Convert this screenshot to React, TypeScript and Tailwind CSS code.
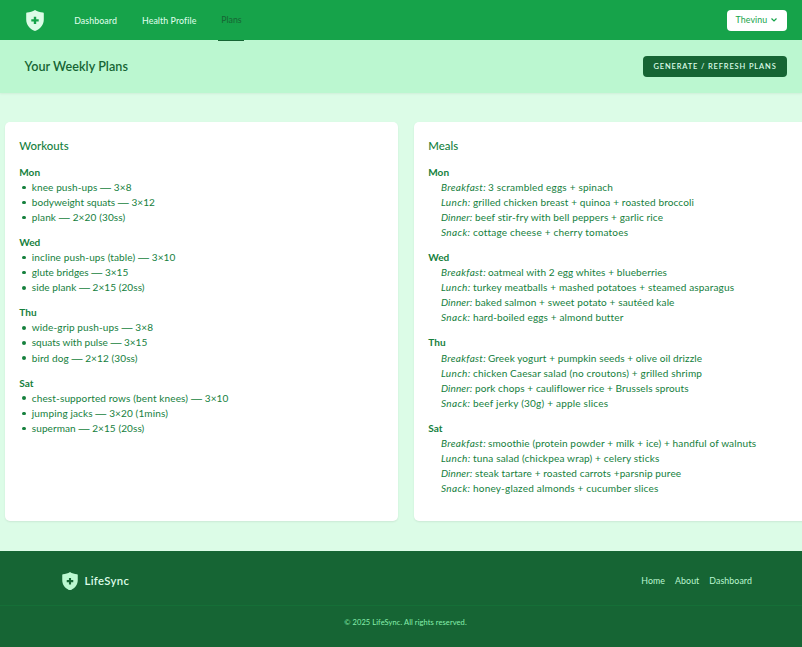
import { ReactNode } from 'react';

type Line = { label?: string; text: string; fit: string };
type Day = { day: string; lines: Line[] };

const workouts: Day[] = [
  { day: 'Mon', lines: [
    { text: 'knee push-ups — 3×8', fit: 'tracking-[0.1px]' },
    { text: 'bodyweight squats — 3×12', fit: 'tracking-[0.03px]' },
    { text: 'plank — 2×20 (30ss)', fit: 'tracking-[0.13px]' },
  ] },
  { day: 'Wed', lines: [
    { text: 'incline push-ups (table) — 3×10', fit: 'tracking-[0.11px]' },
    { text: 'glute bridges — 3×15', fit: 'tracking-[0.02px]' },
    { text: 'side plank — 2×15 (20ss)', fit: 'tracking-[0.06px]' },
  ] },
  { day: 'Thu', lines: [
    { text: 'wide-grip push-ups — 3×8', fit: 'tracking-[0.12px]' },
    { text: 'squats with pulse — 3×15', fit: 'tracking-[0px]' },
    { text: 'bird dog — 2×12 (30ss)', fit: 'tracking-[0.1px]' },
  ] },
  { day: 'Sat', lines: [
    { text: 'chest-supported rows (bent knees) — 3×10', fit: 'tracking-[0.13px]' },
    { text: 'jumping jacks — 3×20 (1mins)', fit: 'tracking-[0.12px]' },
    { text: 'superman — 2×15 (20ss)', fit: 'tracking-[0.08px]' },
  ] },
];

const meals: Day[] = [
  { day: 'Mon', lines: [
    { label: 'Breakfast:', text: '3 scrambled eggs + spinach', fit: 'tracking-[0.19px]' },
    { label: 'Lunch:', text: 'grilled chicken breast + quinoa + roasted broccoli', fit: 'tracking-[0.13px]' },
    { label: 'Dinner:', text: 'beef stir-fry with bell peppers + garlic rice', fit: 'tracking-[0.12px]' },
    { label: 'Snack:', text: 'cottage cheese + cherry tomatoes', fit: 'tracking-[0.2px]' },
  ] },
  { day: 'Wed', lines: [
    { label: 'Breakfast:', text: 'oatmeal with 2 egg whites + blueberries', fit: 'tracking-[0.1px]' },
    { label: 'Lunch:', text: 'turkey meatballs + mashed potatoes + steamed asparagus', fit: 'tracking-[0.155px]' },
    { label: 'Dinner:', text: 'baked salmon + sweet potato + sautéed kale', fit: 'tracking-[0.11px]' },
    { label: 'Snack:', text: 'hard-boiled eggs + almond butter', fit: 'tracking-[0.13px]' },
  ] },
  { day: 'Thu', lines: [
    { label: 'Breakfast:', text: 'Greek yogurt + pumpkin seeds + olive oil drizzle', fit: 'tracking-[0.09px]' },
    { label: 'Lunch:', text: 'chicken Caesar salad (no croutons) + grilled shrimp', fit: 'tracking-[0.16px]' },
    { label: 'Dinner:', text: 'pork chops + cauliflower rice + Brussels sprouts', fit: 'tracking-[0.1px]' },
    { label: 'Snack:', text: 'beef jerky (30g) + apple slices', fit: 'tracking-[0.2px]' },
  ] },
  { day: 'Sat', lines: [
    { label: 'Breakfast:', text: 'smoothie (protein powder + milk + ice) + handful of walnuts', fit: 'tracking-[0.13px]' },
    { label: 'Lunch:', text: 'tuna salad (chickpea wrap) + celery sticks', fit: 'tracking-[0.17px]' },
    { label: 'Dinner:', text: 'steak tartare + roasted carrots +parsnip puree', fit: 'tracking-[0.12px]' },
    { label: 'Snack:', text: 'honey-glazed almonds + cucumber slices', fit: 'tracking-[0.18px]' },
  ] },
];

const labelFit: Record<string, string> = {
  'Breakfast:': 'w-[47px] tracking-[0.3px]',
  'Lunch:': 'w-[32px] tracking-[0.35px]',
  'Dinner:': 'w-[34px] tracking-[0.1px]',
  'Snack:': 'w-[32px] tracking-[0.35px]',
};

function Shield({ className }: { className: string }) {
  return (
    <svg viewBox="0 0 18 21" className={className} fill="currentColor">
      <path
        fillRule="evenodd"
        d="M9 0C6.8 1.5 3.7 2.3 1 2.5Q.2 2.6.2 3.5V9.5C.2 15 3.8 19 9 21C14.2 19 17.8 15 17.8 9.5V3.5Q17.8 2.6 17 2.5C14.3 2.3 11.2 1.5 9 0ZM7.8 6.7V9.2H5.3V11.6H7.8V14.1H10.2V11.6H12.7V9.2H10.2V6.7Z"
      />
    </svg>
  );
}

function Card({ title, children }: { title: string; children: ReactNode }) {
  return (
    <section className="h-[398.5px] w-[393.5px] shrink-0 rounded-[5px] bg-white px-[14.8px] pt-[14.5px] text-[#15803d] shadow-[0_1px_2px_rgba(0,0,0,0.08)]">
      <h3 className="mb-[10.8px] text-[11.4px] leading-[17.5px] font-medium">{title}</h3>
      {children}
    </section>
  );
}

function Exercise({ text, fit }: { text: string; fit: string }) {
  const [name, sets] = text.split('—');
  return (
    <span className={fit}>
      {name}
      <span className="font-['Liberation_Sans',sans-serif] text-[11px] leading-none">—</span>
      {sets}
    </span>
  );
}

function DayBlock({ day, lines }: Day) {
  return (
    <div className="mb-[10.04px] text-[10.04px] leading-[15.07px]">
      <h4 className="font-bold">{day}</h4>
      <ul>
        {lines.map(({ label, text, fit }) =>
          label ? (
            <li key={text} className="flex pl-[12.7px] whitespace-nowrap">
              <em className={labelFit[label]}>{label}</em>
              <span className={fit}>{text}</span>
            </li>
          ) : (
            <li key={text} className="flex h-[15.07px] items-center pl-[3.2px] whitespace-nowrap">
              <i className="mr-[5.8px] size-[3.5px] rounded-full bg-[#15803d]" />
              <Exercise text={text} fit={fit} />
            </li>
          ),
        )}
      </ul>
    </div>
  );
}

export default function App() {
  return (
    <div className="flex h-[647px] w-full flex-col overflow-hidden bg-[#dcfce7] font-['Lato',sans-serif]">
      <nav className="relative z-10 flex h-10 shrink-0 items-center bg-[#16a34a] pr-[15px] pl-[26px] text-[8.8px] text-[#dcfce7]">
        <Shield className="h-[21px] w-[18px]" />
        <a className="ml-[30.2px] pt-px font-medium tracking-[0.08px]">Dashboard</a>
        <a className="ml-[25px] pt-px font-medium tracking-[0.08px]">Health Profile</a>
        <a className="-mb-[1px] ml-[22px] flex h-[41px] w-[26px] items-center justify-center border-b border-[#166534] text-[#166534]">Plans</a>
        <button className="ml-auto flex h-[21px] w-[60px] items-center rounded-[4px] bg-white pl-[8.5px] text-[#16a34a]">
          <span className="w-[35px] text-left tracking-[0.1px]">Thevinu</span>
          <svg viewBox="0 0 6 4" className="h-[4px] w-[6px]" fill="none" stroke="currentColor" strokeWidth="1.2">
            <path d="M.5.5 3 3 5.5.5" />
          </svg>
        </button>
      </nav>

      <header className="flex h-[52.5px] shrink-0 items-center justify-between bg-[#bbf7d0] pr-[15px] pl-[24.5px] shadow-[0_1px_2px_rgba(0,0,0,0.06)]">
        <h2 className="pt-[2px] text-[12.6px] font-semibold tracking-[0.05px] text-[#166534]">Your Weekly Plans</h2>
        <button className="flex h-[21px] w-[144px] items-center justify-center rounded-[4px] bg-[#166534] text-[7.5px] font-semibold tracking-[0.85px] whitespace-nowrap text-[#dcfce7]">
          GENERATE / REFRESH PLANS
        </button>
      </header>

      <main className="flex h-[458.5px] shrink-0 gap-[15.5px] pt-[29.5px] pl-[4.5px]">
        <Card title="Workouts">
          {workouts.map((d) => <DayBlock key={d.day} {...d} />)}
        </Card>
        <Card title="Meals">
          {meals.map((d) => <DayBlock key={d.day} {...d} />)}
        </Card>
      </main>

      <footer className="flex h-24 shrink-0 flex-col bg-[#166534]">
        <div className="flex h-[54px] items-center pt-[6px] pr-[50px] pl-[61.5px] text-[#bbf7d0]">
          <Shield className="h-[18.5px] w-4" />
          <span className="ml-[7px] text-[11.3px] font-semibold tracking-[0.35px] text-[#dcfce7]">LifeSync</span>
          <div className="ml-auto flex gap-[10px] text-[8.8px] tracking-[0.08px]">
            <a>Home</a>
            <a>About</a>
            <a>Dashboard</a>
          </div>
        </div>
        <div className="flex h-[35px] items-center justify-center border-t border-[#15803d]/40 pl-[9px] text-[7.5px] tracking-[0.08px] text-[#86efac]">
          <span>© 2025 LifeSync. All rights reserved.</span>
        </div>
      </footer>
    </div>
  );
}
